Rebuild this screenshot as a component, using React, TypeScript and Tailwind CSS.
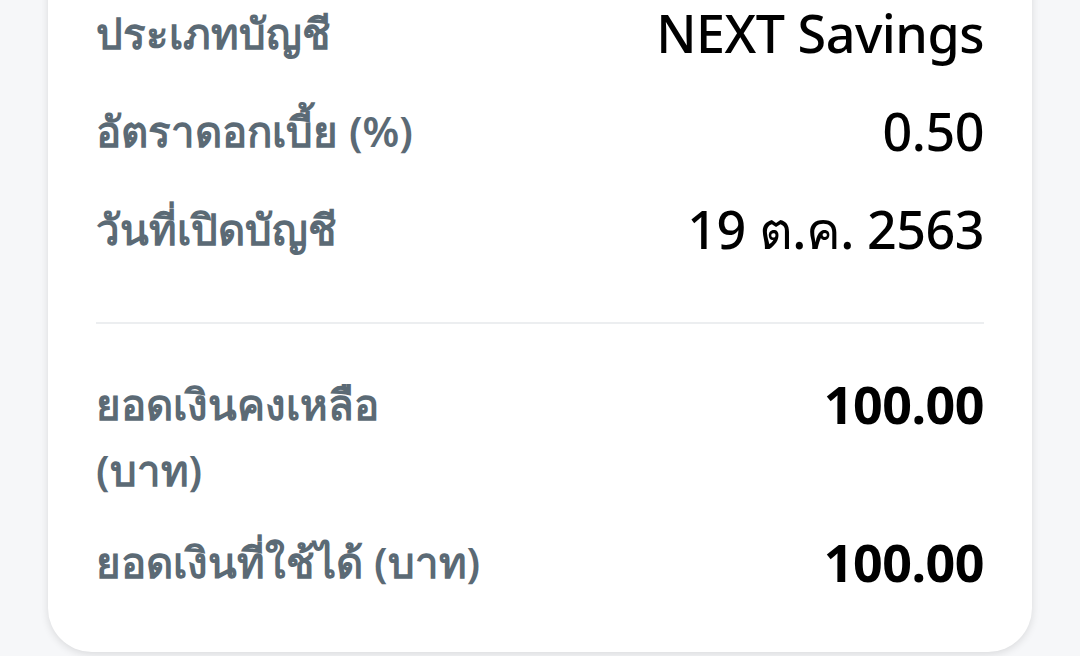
import React from "react";

const Row = ({ label, value, bold }: { label: React.ReactNode; value: string; bold?: boolean }) => (
  <div className="flex items-start justify-between">
    <div className="text-[42px] leading-[66px] text-[#5b6a75] font-semibold">{label}</div>
    <div className={`text-[52px] leading-[66px] text-black tracking-[-0.5px] ${bold ? "font-bold" : "font-medium"}`}>{value}</div>
  </div>
);

export default function App() {
  return (
    <div className="w-[1080px] h-[656px] bg-[#f6f7f9] overflow-hidden" style={{ fontFamily: '"Noto Sans", "Open Sans", sans-serif' }}>
      <div className="mx-[48px] -mt-[40px] h-[692px] bg-white rounded-b-[44px] shadow-[0_2px_8px_rgba(0,0,0,0.12)] px-[48px] pt-[40px]">
        <div className="flex flex-col gap-[32px]">
          <Row label="ประเภทบัญชี" value="NEXT Savings" />
          <Row label="อัตราดอกเบี้ย (%)" value="0.50" />
          <Row label="วันที่เปิดบัญชี" value="19 ต.ค. 2563" />
        </div>
        <div className="h-[2px] bg-[#eceef0] mt-[60px] mb-[47px]" />
        <div className="flex flex-col gap-[26px]">
          <Row label={<>ยอดเงินคงเหลือ<br />(บาท)</>} value="100.00" bold />
          <Row label="ยอดเงินที่ใช้ได้ (บาท)" value="100.00" bold />
        </div>
      </div>
    </div>
  );
}
